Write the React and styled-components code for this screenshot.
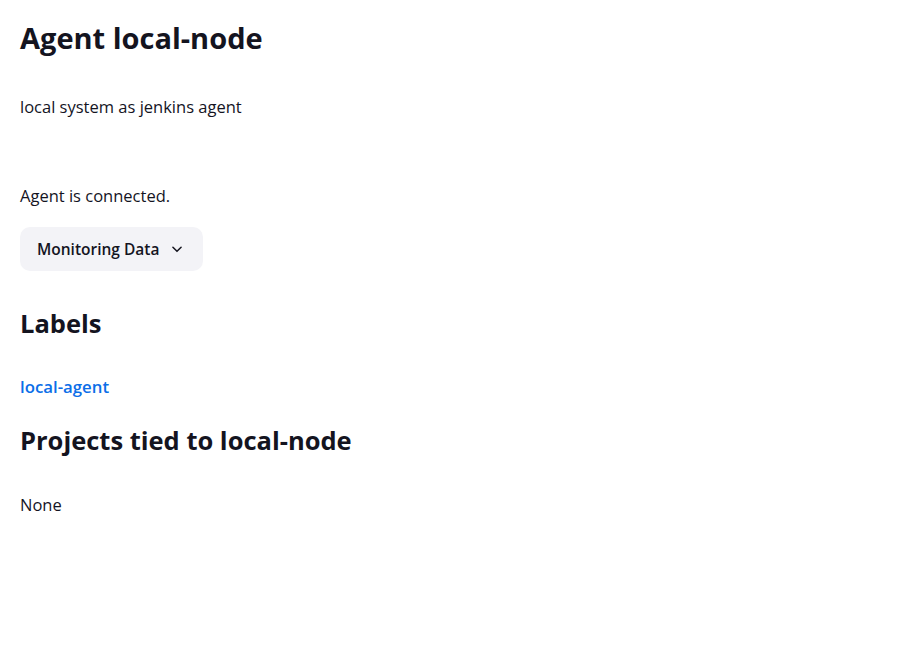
import React from "react";
import styled, { createGlobalStyle } from "styled-components";

const GlobalStyle = createGlobalStyle`
  body {
    margin: 0;
    background: #fff;
    font-family: "Open Sans", "Noto Sans", sans-serif;
    color: #14141f;
  }
`;

const Page = styled.main`
  display: flex;
  flex-direction: column;
  align-items: flex-start;
  padding: 20px 20px 40px;
`;

const Title = styled.h1`
  font-size: 29px;
  line-height: 36px;
  font-weight: 700;
  margin: 0;
`;

const Heading = styled.h2`
  font-size: 25.5px;
  line-height: 30px;
  font-weight: 700;
  margin: ${(p) => p.$top || 0}px 0 0;
`;

const Text = styled.p`
  font-size: 16.5px;
  line-height: 24px;
  font-weight: 400;
  margin: ${(p) => p.$top || 0}px 0 0;
`;

const Toggle = styled.button`
  display: flex;
  align-items: center;
  gap: 11px;
  height: 44px;
  margin-top: 19px;
  padding: 0 19px 0 17px;
  border: none;
  border-radius: 10px;
  background: #f3f3f7;
  color: #14141f;
  font-family: inherit;
  font-size: 15.5px;
  font-weight: 600;
  cursor: pointer;
`;

const LabelLink = styled.a`
  display: block;
  margin-top: 37px;
  font-size: 16.8px;
  line-height: 24px;
  font-weight: 600;
  color: #0b6ee8;
  text-decoration: none;
`;

const Chevron = () => (
  <svg width="14" height="14" viewBox="0 0 24 24" fill="none" stroke="currentColor" strokeWidth="2.6" strokeLinecap="round" strokeLinejoin="round">
    <path d="M5 9l7 7 7-7" />
  </svg>
);

export default function App() {
  return (
    <>
      <GlobalStyle />
      <Page>
        <Title>Agent local-node</Title>
        <Text $top={39}>local system as jenkins agent</Text>
        <Text $top={65}>Agent is connected.</Text>
        <Toggle type="button">
          Monitoring Data
          <Chevron />
        </Toggle>
        <Heading $top={37}>Labels</Heading>
        <LabelLink href="#">local-agent</LabelLink>
        <Heading $top={26}>Projects tied to local-node</Heading>
        <Text $top={38}>None</Text>
      </Page>
    </>
  );
}
